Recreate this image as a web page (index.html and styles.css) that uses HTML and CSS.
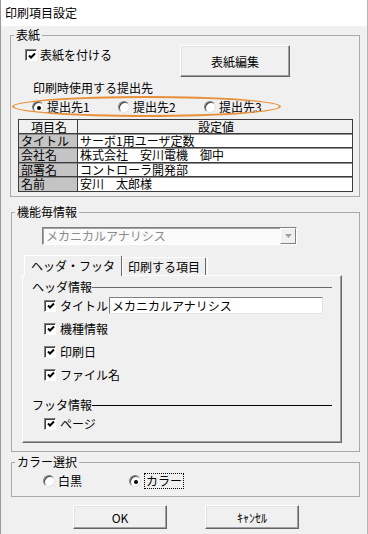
FILE: index.html
```html
<!DOCTYPE html>
<html lang="ja">
<head>
  <meta charset="UTF-8" />
  <meta name="viewport" content="width=device-width, initial-scale=1.0"/>
  <title>印刷項目設定</title>
  <link rel="stylesheet" href="styles.css">
</head>
<body>
  <div class="window">
    <div class="titlebar">印刷項目設定</div>

    <fieldset class="group group-cover">
      <legend>表紙</legend>
      <div class="cover-top">
        <label class="check"><span class="box"><svg width="8" height="8" viewBox="0 0 8 8"><path d="M1 3.5 L3 5.5 L7 1.5" fill="none" stroke="#000" stroke-width="2"/></svg></span>表紙を付ける</label>
        <button class="btn btn-edit">表紙編集</button>
      </div>
      <div class="dest-title">印刷時使用する提出先</div>
      <div class="dest-row">
        <label class="radio"><span class="circle on"></span>提出先1</label>
        <label class="radio"><span class="circle"></span>提出先2</label>
        <label class="radio"><span class="circle"></span>提出先3</label>
      </div>
      <div class="highlight"></div>
      <table class="info">
        <tr class="head"><th class="key-col">項目名</th><th>設定値</th></tr>
        <tr class="r1"><td class="key">タイトル</td><td>サーボ1用ユーザ定数</td></tr>
        <tr class="r2"><td class="key">会社名</td><td>株式会社　安川電機　御中</td></tr>
        <tr class="r1"><td class="key">部署名</td><td>コントローラ開発部</td></tr>
        <tr class="r2"><td class="key">名前</td><td>安川　太郎様</td></tr>
      </table>
    </fieldset>

    <fieldset class="group group-func">
      <legend>機能毎情報</legend>
      <div class="combo">
        <span class="combo-text">メカニカルアナリシス</span>
        <span class="combo-btn"><svg width="7" height="4" viewBox="0 0 7 4"><path d="M0 0 H7 L3.5 4z" fill="#a0a0a0"/></svg></span>
      </div>

      <div class="tabctl">
        <div class="tabs">
          <div class="tab active">ヘッダ・フッタ</div>
          <div class="tab">印刷する項目</div>
          <div class="tab-stub"></div>
        </div>
        <div class="panel">
          <div class="sep sep-head"><span>ヘッダ情報</span><i class="line"></i></div>
          <div class="row">
            <label class="check"><span class="box"><svg width="8" height="8" viewBox="0 0 8 8"><path d="M1 3.5 L3 5.5 L7 1.5" fill="none" stroke="#000" stroke-width="2"/></svg></span>タイトル</label>
            <div class="textbox">メカニカルアナリシス</div>
          </div>
          <div class="row">
            <label class="check"><span class="box"><svg width="8" height="8" viewBox="0 0 8 8"><path d="M1 3.5 L3 5.5 L7 1.5" fill="none" stroke="#000" stroke-width="2"/></svg></span>機種情報</label>
          </div>
          <div class="row">
            <label class="check"><span class="box"><svg width="8" height="8" viewBox="0 0 8 8"><path d="M1 3.5 L3 5.5 L7 1.5" fill="none" stroke="#000" stroke-width="2"/></svg></span>印刷日</label>
          </div>
          <div class="row">
            <label class="check"><span class="box"><svg width="8" height="8" viewBox="0 0 8 8"><path d="M1 3.5 L3 5.5 L7 1.5" fill="none" stroke="#000" stroke-width="2"/></svg></span>ファイル名</label>
          </div>
          <div class="sep sep-foot"><span>フッタ情報</span><i class="line"></i></div>
          <div class="row">
            <label class="check"><span class="box"><svg width="8" height="8" viewBox="0 0 8 8"><path d="M1 3.5 L3 5.5 L7 1.5" fill="none" stroke="#000" stroke-width="2"/></svg></span>ページ</label>
          </div>
        </div>
      </div>
    </fieldset>

    <fieldset class="group group-color">
      <legend>カラー選択</legend>
      <div class="color-row">
        <label class="radio"><span class="circle"></span>白黒</label>
        <label class="radio"><span class="circle on"></span><span class="focus">カラー</span></label>
      </div>
    </fieldset>

    <div class="actions">
      <button class="btn btn-dlg">OK</button>
      <button class="btn btn-dlg">ｷｬﾝｾﾙ</button>
    </div>
  </div>
</body>
</html>
```

FILE: styles.css
```css
body {
  margin: 0;
  background: #f0f0f0;
  font-family: "Noto Sans CJK JP", sans-serif;
  font-size: 12px;
  color: #000;
}

.window {
  width: 368px;
  height: 534px;
  box-sizing: border-box;
  border-left: 1px solid #9a9a9a;
  border-right: 1px solid #b4b4b4;
  background: #f0f0f0;
  overflow: hidden;
}

.titlebar {
  height: 26px;
  line-height: 26px;
  padding-left: 4px;
  background: #fff;
}

/* group boxes */
.group {
  position: relative;
  margin: 8px 0 0 10px;
  padding: 0;
  width: 349px;
  box-sizing: border-box;
  border: 1px solid #a9a9a9;
  min-inline-size: 0;
}

.group legend {
  margin-left: 3px;
  padding: 0 2px;
  line-height: 14px;
}

.group-cover {
  margin: 2px 0 0 9px;
  width: 350px;
  padding-bottom: 4px;
}

.cover-top {
  display: flex;
  align-items: flex-start;
  height: 36px;
}

.cover-top .check {
  margin: 6px 0 0 14px;
}

.check {
  display: flex;
  align-items: center;
  gap: 3px;
  line-height: 14px;
}

.box {
  width: 12px;
  height: 12px;
  box-sizing: border-box;
  display: flex;
  align-items: center;
  justify-content: center;
  background: #fff;
  border: 1px solid;
  border-color: #808080 #fff #fff #808080;
  box-shadow: inset 1px 1px 0 #404040;
  padding: 1px 0 0 1px;
}

.btn {
  font-family: inherit;
  font-size: 12px;
  color: #000;
  background: #f0f0f0;
  border: 1px solid;
  border-color: #fff #646464 #646464 #fff;
  box-shadow: inset -1px -1px 0 #a0a0a0, inset 1px 1px 0 #e3e3e3;
  padding: 0;
}

.btn-edit {
  margin: 3px 69px 0 auto;
  width: 110px;
  height: 32px;
}

.dest-title {
  margin: 3px 0 0 22px;
  line-height: 14px;
}

.dest-row {
  display: flex;
  margin: 5px 0 0 21px;
}

.radio {
  display: flex;
  align-items: center;
  gap: 3px;
  width: 86px;
  line-height: 14px;
}

.circle {
  width: 12px;
  height: 12px;
  box-sizing: border-box;
  border-radius: 50%;
  background: #fff;
  border: 1px solid;
  border-color: #808080 #e3e3e3 #e3e3e3 #808080;
  box-shadow: inset 1px 1px 0 #404040;
  display: flex;
  align-items: center;
  justify-content: center;
}

.circle.on::after {
  content: "";
  width: 4px;
  height: 4px;
  border-radius: 50%;
  background: #000;
  margin: 1px 0 0 1px;
}

.highlight {
  position: absolute;
  left: 1px;
  top: 54px;
  width: 269px;
  height: 21px;
  box-sizing: border-box;
  border: 2px solid #e8903a;
  border-radius: 50%;
}

.info {
  margin: 5px 0 0 7px;
  width: 335px;
  border-collapse: collapse;
  font-size: 12px;
}

.info th,
.info td {
  border: 1px solid #3c3c3c;
  padding: 0 0 0 2px;
  font-weight: normal;
  text-align: left;
  white-space: nowrap;
}

.info th {
  background: #f0f0f0;
  text-align: center;
  line-height: 13px;
}

.info .key-col {
  width: 56px;
}

.info td {
  background: #fff;
  box-shadow: inset 0 1px 0 #909090;
}

.info .r1 td {
  line-height: 13px;
}

.info .r2 td {
  line-height: 14px;
}

.info td.key {
  background: #c4c4c4;
}

/* function group */
.group-func {
  padding-bottom: 8px;
}

.combo {
  display: flex;
  margin: 8px 0 0 30px;
  width: 255px;
  height: 18px;
  box-sizing: border-box;
  border: 1px solid;
  border-color: #808080 #fff #fff #808080;
  box-shadow: inset 1px 1px 0 #a0a0a0;
  background: #fbfbfb;
}

.combo-text {
  flex: 1;
  color: #8a8a8a;
  line-height: 16px;
  padding-left: 3px;
}

.combo-btn {
  width: 16px;
  box-sizing: border-box;
  background: #f0f0f0;
  border: 1px solid;
  border-color: #fff #808080 #808080 #fff;
  display: flex;
  align-items: center;
  justify-content: center;
}

.tabctl {
  margin: 10px 0 0 10px;
  width: 320px;
}

.tabs {
  display: flex;
  align-items: flex-end;
  height: 20px;
  padding-left: 2px;
  position: relative;
  z-index: 1;
}

.tab {
  height: 18px;
  line-height: 17px;
  box-sizing: border-box;
  padding: 0 5px;
  background: #f0f0f0;
  border-top: 1px solid #fff;
  border-left: 1px solid #fff;
  border-right: 1px solid #696969;
  border-top-left-radius: 2px;
  border-top-right-radius: 2px;
}

.tab.active {
  height: 21px;
  margin-bottom: -1px;
  line-height: 19px;
  padding: 0 6px;
}

.tab-stub {
  width: 2px;
  height: 18px;
  border-left: 1px solid #fff;
  margin-left: 1px;
}

.panel {
  height: 168px;
  box-sizing: border-box;
  border-top: 1px solid #fff;
  border-left: 1px solid #fff;
  border-right: 1px solid #696969;
  border-bottom: 1px solid #696969;
  box-shadow: inset -1px -1px 0 #a0a0a0;
}

.sep {
  display: flex;
  align-items: center;
  margin: 4px 9px 0 9px;
  line-height: 14px;
}

.sep .line {
  flex: 1;
  height: 1px;
  background: #6a6a6a;
}

.sep-foot {
  margin-top: 12px;
}

.sep-foot .line {
  background: #000;
}

.row {
  display: flex;
  align-items: center;
  height: 23px;
  padding-left: 21px;
}

.row .check {
  gap: 4px;
}

.textbox {
  margin-left: 1px;
  width: 214px;
  height: 17px;
  box-sizing: border-box;
  background: #fff;
  border: 1px solid;
  border-color: #808080 #e3e3e3 #e3e3e3 #808080;
  line-height: 15px;
  padding-left: 2px;
}

/* color group */
.group-color {
  margin-top: 3px;
  padding-bottom: 7px;
}

.color-row {
  display: flex;
  margin: 4px 0 0 31px;
}

.focus {
  border: 1px dotted #000;
  padding: 0 1px;
  line-height: 14px;
}

.actions {
  display: flex;
  gap: 38px;
  margin-top: 8px;
  padding-left: 72px;
}

.btn-dlg {
  width: 94px;
  height: 24px;
}
```
